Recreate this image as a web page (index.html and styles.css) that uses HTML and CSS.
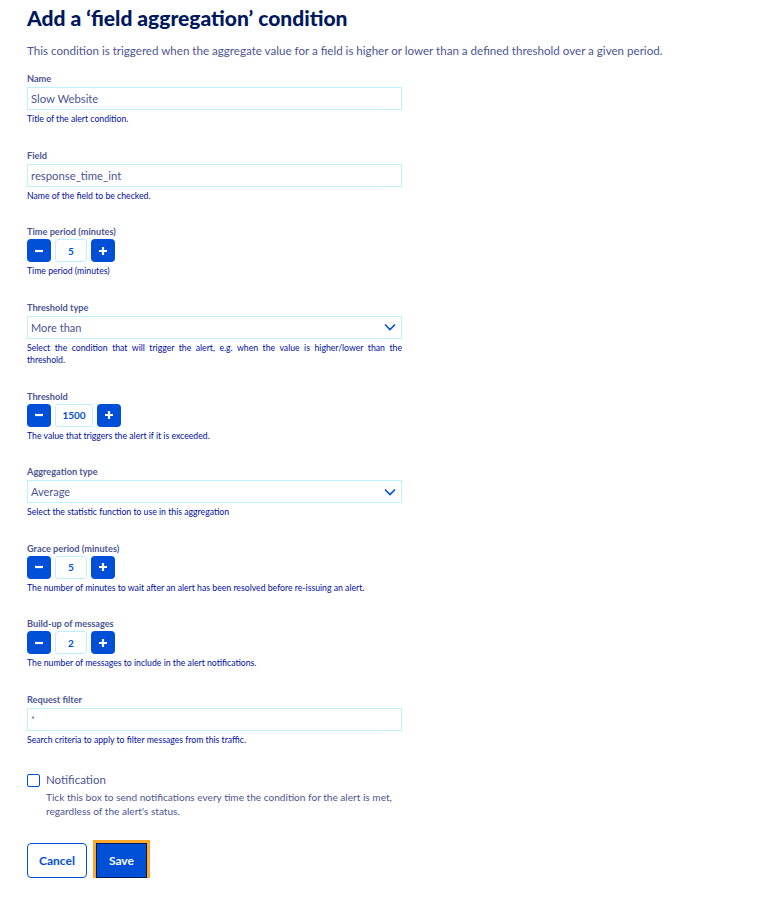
FILE: index.html
```html
<!DOCTYPE html>
<html lang="en">

<head>
    <meta charset="UTF-8">
    <meta name="viewport" content="width=device-width, initial-scale=1.0">
    <title>Add a field aggregation condition</title>
    <link rel="stylesheet" href="styles.css">
</head>

<body>
    <div class="page">
        <h1 class="title">Add a ‘field aggregation’ condition</h1>
        <p class="intro">This condition is triggered when the aggregate value for a field is higher or lower than a defined threshold over a given period.</p>

        <form class="form">
            <div class="group">
                <label class="label">Name</label>
                <input class="input" type="text" value="Slow Website">
                <p class="help">Title of the alert condition.</p>
            </div>

            <div class="group">
                <label class="label">Field</label>
                <input class="input" type="text" value="response_time_int">
                <p class="help">Name of the field to be checked.</p>
            </div>

            <div class="group num">
                <label class="label">Time period (minutes)</label>
                <div class="stepper">
                    <button type="button" class="step"><svg width="10" height="10" viewBox="0 0 10 10"><path d="M1 5h8" stroke="#fff" stroke-width="2.2"/></svg></button>
                    <span class="step-value">5</span>
                    <button type="button" class="step"><svg width="10" height="10" viewBox="0 0 10 10"><path d="M1 5h8M5 1v8" stroke="#fff" stroke-width="2.2"/></svg></button>
                </div>
                <p class="help">Time period (minutes)</p>
            </div>

            <div class="group">
                <label class="label">Threshold type</label>
                <div class="select">
                    <span>More than</span>
                    <svg width="12" height="8" viewBox="0 0 12 8"><path d="M1 1.5l5 5 5-5" fill="none" stroke="#0050d7" stroke-width="1.6"/></svg>
                </div>
                <p class="help justify">Select the condition that will trigger the alert, e.g. when the value is higher/lower than the threshold.</p>
            </div>

            <div class="group num">
                <label class="label">Threshold</label>
                <div class="stepper">
                    <button type="button" class="step"><svg width="10" height="10" viewBox="0 0 10 10"><path d="M1 5h8" stroke="#fff" stroke-width="2.2"/></svg></button>
                    <span class="step-value wide">1500</span>
                    <button type="button" class="step"><svg width="10" height="10" viewBox="0 0 10 10"><path d="M1 5h8M5 1v8" stroke="#fff" stroke-width="2.2"/></svg></button>
                </div>
                <p class="help">The value that triggers the alert if it is exceeded.</p>
            </div>

            <div class="group">
                <label class="label">Aggregation type</label>
                <div class="select">
                    <span>Average</span>
                    <svg width="12" height="8" viewBox="0 0 12 8"><path d="M1 1.5l5 5 5-5" fill="none" stroke="#0050d7" stroke-width="1.6"/></svg>
                </div>
                <p class="help">Select the statistic function to use in this aggregation</p>
            </div>

            <div class="group num">
                <label class="label">Grace period (minutes)</label>
                <div class="stepper">
                    <button type="button" class="step"><svg width="10" height="10" viewBox="0 0 10 10"><path d="M1 5h8" stroke="#fff" stroke-width="2.2"/></svg></button>
                    <span class="step-value">5</span>
                    <button type="button" class="step"><svg width="10" height="10" viewBox="0 0 10 10"><path d="M1 5h8M5 1v8" stroke="#fff" stroke-width="2.2"/></svg></button>
                </div>
                <p class="help">The number of minutes to wait after an alert has been resolved before re-issuing an alert.</p>
            </div>

            <div class="group num">
                <label class="label">Build-up of messages</label>
                <div class="stepper">
                    <button type="button" class="step"><svg width="10" height="10" viewBox="0 0 10 10"><path d="M1 5h8" stroke="#fff" stroke-width="2.2"/></svg></button>
                    <span class="step-value">2</span>
                    <button type="button" class="step"><svg width="10" height="10" viewBox="0 0 10 10"><path d="M1 5h8M5 1v8" stroke="#fff" stroke-width="2.2"/></svg></button>
                </div>
                <p class="help">The number of messages to include in the alert notifications.</p>
            </div>

            <div class="group">
                <label class="label">Request filter</label>
                <input class="input small" type="text" value="*">
                <p class="help">Search criteria to apply to filter messages from this traffic.</p>
            </div>

            <div class="check">
                <span class="box"></span>
                <div>
                    <div class="check-label">Notification</div>
                    <p class="check-help">Tick this box to send notifications every time the condition for the alert is met, regardless of the alert's status.</p>
                </div>
            </div>

            <div class="actions">
                <button type="button" class="btn cancel">Cancel</button>
                <button type="button" class="btn save">Save</button>
            </div>
        </form>
    </div>
</body>

</html>
```

FILE: styles.css
```css
html,
body {
    margin: 0;
    background: #fff;
}

body {
    font-family: Lato, "Noto Sans", sans-serif;
    color: #4d5592;
}

.page {
    padding: 5px 27px 0;
}

.title {
    margin: 0;
    font-size: 21px;
    line-height: 26px;
    font-weight: 900;
    color: #00185e;
}

.intro {
    margin: 12px 0 0;
    font-size: 11.6px;
    line-height: 16px;
}

.form {
    width: 375px;
    margin-top: 14px;
}

.group {
    margin-bottom: 24px;
}

.label {
    display: block;
    font-size: 9.2px;
    line-height: 12px;
    font-weight: 700;
    margin-bottom: 2px;
}

.num .label {
    margin-bottom: 1px;
}

.input,
.select {
    box-sizing: border-box;
    width: 100%;
    height: 23px;
    border: 1px solid #bef1ff;
    border-radius: 0;
    padding: 0 3px;
    font-family: inherit;
    font-size: 11.3px;
    color: #4d5592;
    outline: none;
    display: block;
}

.input.small {
    font-size: 9px;
}

.select {
    display: flex;
    align-items: center;
    justify-content: space-between;
    padding-right: 5px;
    font-size: 11px;
}

.help {
    margin: 3px 0 0;
    font-size: 8.7px;
    line-height: 12.5px;
    color: #000e9c;
}

.justify {
    text-align: justify;
}

.stepper {
    display: flex;
    align-items: center;
    gap: 4px;
}

.step {
    width: 24px;
    height: 23px;
    border: 0;
    border-radius: 4px;
    background: #0050d7;
    padding: 0;
    display: flex;
    align-items: center;
    justify-content: center;
}

.step-value {
    box-sizing: border-box;
    width: 32px;
    height: 23px;
    border: 1px solid #bef1ff;
    border-radius: 3px;
    display: flex;
    align-items: center;
    justify-content: center;
    font-size: 10px;
    font-weight: 700;
    color: #0050d7;
}

.step-value.wide {
    width: 38px;
}

.check {
    display: flex;
    gap: 6px;
    margin-top: 27px;
}

.box {
    box-sizing: border-box;
    width: 13px;
    height: 13px;
    margin-top: 1px;
    border: 1.5px solid #0050d7;
    border-radius: 2px;
    flex: none;
}

.check-label {
    font-size: 11.5px;
    line-height: 14px;
}

.check-help {
    margin: 3px 0 0;
    font-size: 10.1px;
    line-height: 14px;
}

.actions {
    display: flex;
    align-items: center;
    gap: 9px;
    margin-top: 25px;
}

.btn {
    height: 35px;
    border-radius: 4px;
    font-family: inherit;
    font-size: 12px;
    font-weight: 700;
    padding: 0 11px;
}

.cancel {
    background: #fff;
    color: #0050d7;
    border: 1px solid #0050d7;
}

.save {
    background: #0050d7;
    color: #fff;
    border: 1px solid #00185e;
    border-radius: 0;
    outline: 3px solid #ffa82e;
    padding: 0 12px;
}
```
